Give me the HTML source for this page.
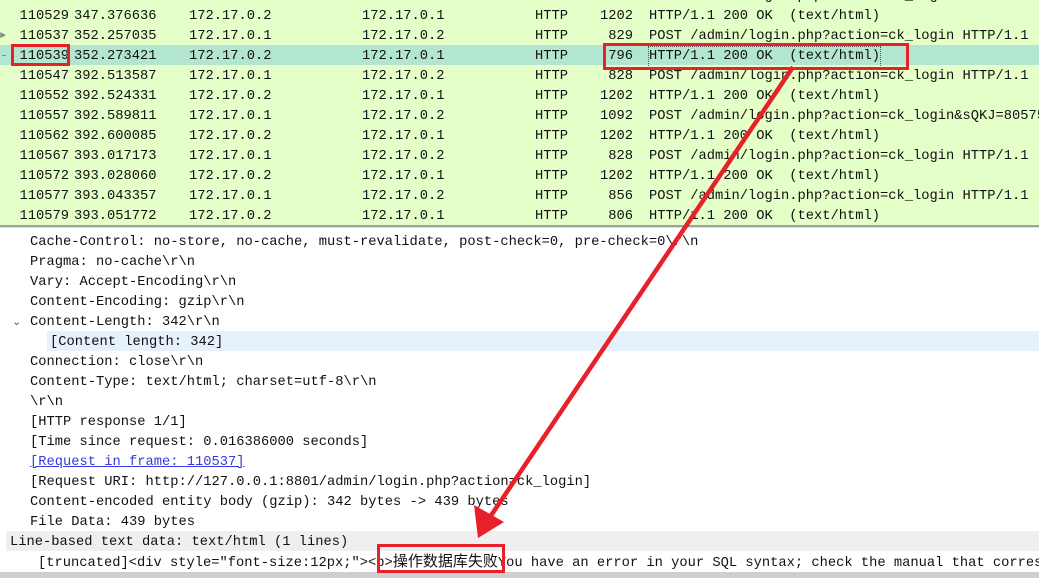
<!DOCTYPE html>
<html><head><meta charset="utf-8"><style>
*{margin:0;padding:0;box-sizing:border-box}
body{width:1039px;height:578px;overflow:hidden;background:#fff;position:relative;font-family:"Liberation Mono","Noto Sans CJK SC",monospace;font-size:13.75px;color:#111}
.top{position:absolute;left:0;top:0;width:1039px;height:225px;background:#e4ffc7}
.row{position:absolute;left:0;width:1039px;height:20px;line-height:20px;white-space:pre}
.row span{position:absolute;top:2px}
.sel{background:#b3e6d1}
.n{right:970px;text-align:right}
.t{left:74px}.s{left:189px}.d{left:362px}.p{left:535px}
.l{right:406px;text-align:right}.i{left:649px}
.sep{position:absolute;left:0;top:225px;width:1039px;height:3px;background:#a0a0a0;border-bottom:1px solid #ddd}
.ln{position:absolute;height:20px;line-height:20px;white-space:pre;left:30px;padding-top:2px}
.box{position:absolute;border:3px solid #e8202a}
a{color:#3a3ae0;text-decoration:underline}
.cjk{font-family:"Noto Sans CJK SC",sans-serif;font-size:15px;line-height:16px}
</style></head><body>
<div class="top">
<div class="row" style="top:-15px"><span class="i">POST /admin/login.php?action=ck_login HTTP/1.1</span></div>
<div class="row" style="top:5px"><span class="n">110529</span><span class="t">347.376636</span><span class="s">172.17.0.2</span><span class="d">172.17.0.1</span><span class="p">HTTP</span><span class="l">1202</span><span class="i">HTTP/1.1 200 OK  (text/html)</span></div>
<div class="row" style="top:25px"><span style="left:0;color:#888;font-size:10px">&#9658;</span><span class="n">110537</span><span class="t">352.257035</span><span class="s">172.17.0.1</span><span class="d">172.17.0.2</span><span class="p">HTTP</span><span class="l">829</span><span class="i">POST /admin/login.php?action=ck_login HTTP/1.1</span></div>
<div class="row sel" style="top:45px"><span style="left:0;color:#888">-</span><span class="n">110539</span><span class="t">352.273421</span><span class="s">172.17.0.2</span><span class="d">172.17.0.1</span><span class="p">HTTP</span><span class="l">796</span><span class="i" style="outline:1px dotted #555">HTTP/1.1 200 OK  (text/html)</span></div>
<div class="row" style="top:65px"><span class="n">110547</span><span class="t">392.513587</span><span class="s">172.17.0.1</span><span class="d">172.17.0.2</span><span class="p">HTTP</span><span class="l">828</span><span class="i">POST /admin/login.php?action=ck_login HTTP/1.1</span></div>
<div class="row" style="top:85px"><span class="n">110552</span><span class="t">392.524331</span><span class="s">172.17.0.2</span><span class="d">172.17.0.1</span><span class="p">HTTP</span><span class="l">1202</span><span class="i">HTTP/1.1 200 OK  (text/html)</span></div>
<div class="row" style="top:105px"><span class="n">110557</span><span class="t">392.589811</span><span class="s">172.17.0.1</span><span class="d">172.17.0.2</span><span class="p">HTTP</span><span class="l">1092</span><span class="i">POST /admin/login.php?action=ck_login&amp;sQKJ=80575</span></div>
<div class="row" style="top:125px"><span class="n">110562</span><span class="t">392.600085</span><span class="s">172.17.0.2</span><span class="d">172.17.0.1</span><span class="p">HTTP</span><span class="l">1202</span><span class="i">HTTP/1.1 200 OK  (text/html)</span></div>
<div class="row" style="top:145px"><span class="n">110567</span><span class="t">393.017173</span><span class="s">172.17.0.1</span><span class="d">172.17.0.2</span><span class="p">HTTP</span><span class="l">828</span><span class="i">POST /admin/login.php?action=ck_login HTTP/1.1</span></div>
<div class="row" style="top:165px"><span class="n">110572</span><span class="t">393.028060</span><span class="s">172.17.0.2</span><span class="d">172.17.0.1</span><span class="p">HTTP</span><span class="l">1202</span><span class="i">HTTP/1.1 200 OK  (text/html)</span></div>
<div class="row" style="top:185px"><span class="n">110577</span><span class="t">393.043357</span><span class="s">172.17.0.1</span><span class="d">172.17.0.2</span><span class="p">HTTP</span><span class="l">856</span><span class="i">POST /admin/login.php?action=ck_login HTTP/1.1</span></div>
<div class="row" style="top:205px"><span class="n">110579</span><span class="t">393.051772</span><span class="s">172.17.0.2</span><span class="d">172.17.0.1</span><span class="p">HTTP</span><span class="l">806</span><span class="i">HTTP/1.1 200 OK  (text/html)</span></div>
</div>
<div class="sep"></div>
<div class="ln" style="top:231px">Cache-Control: no-store, no-cache, must-revalidate, post-check=0, pre-check=0\r\n</div>
<div class="ln" style="top:251px">Pragma: no-cache\r\n</div>
<div class="ln" style="top:271px">Vary: Accept-Encoding\r\n</div>
<div class="ln" style="top:291px">Content-Encoding: gzip\r\n</div>
<div class="ln" style="top:311px;left:12px;color:#555;font-size:11px">&#8964;</div>
<div class="ln" style="top:311px">Content-Length: 342\r\n</div>
<div style="position:absolute;left:47px;top:331px;width:992px;height:20px;background:#e6f1fb"></div>
<div class="ln" style="top:331px;left:50px">[Content length: 342]</div>
<div class="ln" style="top:351px">Connection: close\r\n</div>
<div class="ln" style="top:371px">Content-Type: text/html; charset=utf-8\r\n</div>
<div class="ln" style="top:391px">\r\n</div>
<div class="ln" style="top:411px">[HTTP response 1/1]</div>
<div class="ln" style="top:431px">[Time since request: 0.016386000 seconds]</div>
<div class="ln" style="top:451px"><a>[Request in frame: 110537]</a></div>
<div class="ln" style="top:471px">[Request URI: http://127.0.0.1:8801/admin/login.php?action=ck_login]</div>
<div class="ln" style="top:491px">Content-encoded entity body (gzip): 342 bytes -&gt; 439 bytes</div>
<div class="ln" style="top:511px">File Data: 439 bytes</div>
<div style="position:absolute;left:6px;top:531px;width:1033px;height:20px;background:#efefef"></div>
<div class="ln" style="top:531px;left:10px">Line-based text data: text/html (1 lines)</div>
<div class="ln" style="top:551px;left:38px">[truncated]&lt;div style="font-size:12px;"&gt;&lt;p&gt;<span class="cjk">操作数据库失败</span>You have an error in your SQL syntax; check the manual that corresponds</div>
<div style="position:absolute;left:0;top:572px;width:1039px;height:6px;background:#cfcfcf"></div>
<div class="box" style="left:11px;top:44px;width:59px;height:22px"></div>
<div class="box" style="left:603px;top:43px;width:306px;height:27px"></div>
<div class="box" style="left:377px;top:544px;width:128px;height:29px"></div>
<svg style="position:absolute;left:0;top:0" width="1039" height="578">
<line x1="793" y1="67" x2="488" y2="520" stroke="#e8202a" stroke-width="4.5"/>
<polygon points="478,538 474,505 504,522" fill="#e8202a"/>
</svg>
</body></html>
